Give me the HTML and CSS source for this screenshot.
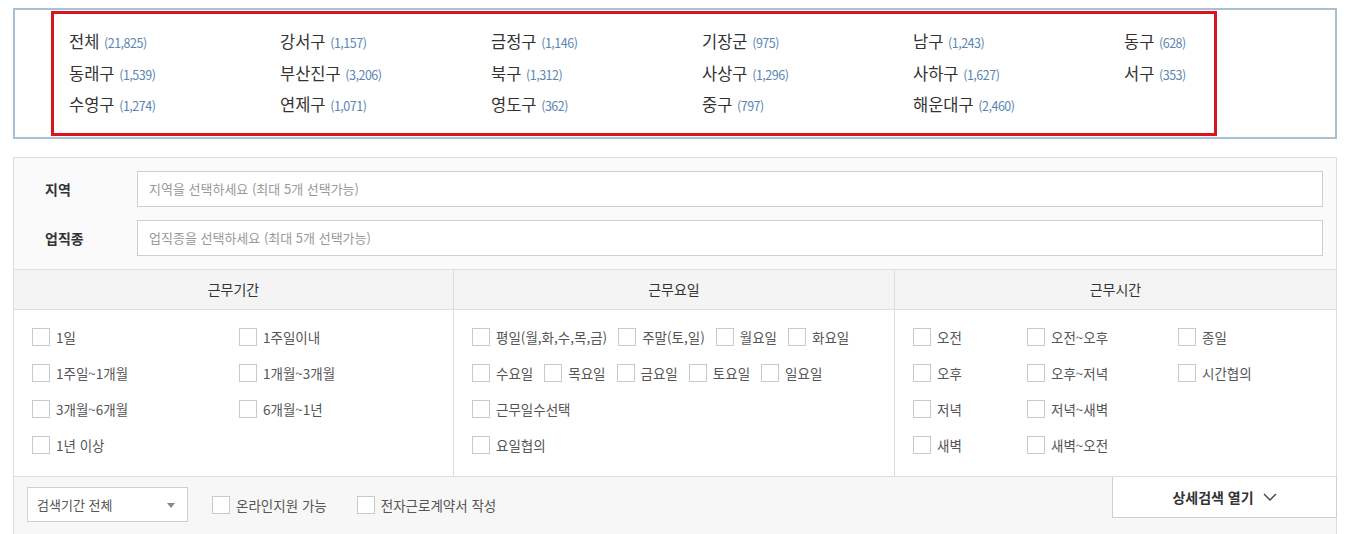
FILE: index.html
```html
<!DOCTYPE html>
<html lang="ko">
<head>
  <meta charset="UTF-8">
  <title>알바 검색</title>
  <link rel="stylesheet" href="styles.css">
</head>
<body>

  <div class="wrap">

    <!-- 지역별 건수 -->
    <div class="area-box">
      <ul class="area-list">
        <li>전체 <span class="cnt">(21,825)</span></li>
        <li>강서구 <span class="cnt">(1,157)</span></li>
        <li>금정구 <span class="cnt">(1,146)</span></li>
        <li>기장군 <span class="cnt">(975)</span></li>
        <li>남구 <span class="cnt">(1,243)</span></li>
        <li>동구 <span class="cnt">(628)</span></li>
        <li>동래구 <span class="cnt">(1,539)</span></li>
        <li>부산진구 <span class="cnt">(3,206)</span></li>
        <li>북구 <span class="cnt">(1,312)</span></li>
        <li>사상구 <span class="cnt">(1,296)</span></li>
        <li>사하구 <span class="cnt">(1,627)</span></li>
        <li>서구 <span class="cnt">(353)</span></li>
        <li>수영구 <span class="cnt">(1,274)</span></li>
        <li>연제구 <span class="cnt">(1,071)</span></li>
        <li>영도구 <span class="cnt">(362)</span></li>
        <li>중구 <span class="cnt">(797)</span></li>
        <li>해운대구 <span class="cnt">(2,460)</span></li>
      </ul>
    </div>

    <!-- 검색 조건 -->
    <div class="search-panel">
      <div class="field-rows">
        <div class="field">
          <label>지역</label>
          <div class="picker">지역을 선택하세요 (최대 5개 선택가능)</div>
        </div>
        <div class="field">
          <label>업직종</label>
          <div class="picker">업직종을 선택하세요 (최대 5개 선택가능)</div>
        </div>
      </div>

      <div class="cond-table">
        <div class="cond-col">
          <div class="cond-head">근무기간</div>
          <div class="cond-body period">
            <label class="chk"><span class="box"></span>1일</label>
            <label class="chk"><span class="box"></span>1주일이내</label>
            <label class="chk"><span class="box"></span>1주일~1개월</label>
            <label class="chk"><span class="box"></span>1개월~3개월</label>
            <label class="chk"><span class="box"></span>3개월~6개월</label>
            <label class="chk"><span class="box"></span>6개월~1년</label>
            <label class="chk"><span class="box"></span>1년 이상</label>
          </div>
        </div>

        <div class="cond-col">
          <div class="cond-head">근무요일</div>
          <div class="cond-body days">
            <div class="day-row">
              <label class="chk"><span class="box"></span>평일(월,화,수,목,금)</label>
              <label class="chk"><span class="box"></span>주말(토,일)</label>
              <label class="chk"><span class="box"></span>월요일</label>
              <label class="chk"><span class="box"></span>화요일</label>
            </div>
            <div class="day-row">
              <label class="chk"><span class="box"></span>수요일</label>
              <label class="chk"><span class="box"></span>목요일</label>
              <label class="chk"><span class="box"></span>금요일</label>
              <label class="chk"><span class="box"></span>토요일</label>
              <label class="chk"><span class="box"></span>일요일</label>
            </div>
            <div class="day-row">
              <label class="chk"><span class="box"></span>근무일수선택</label>
            </div>
            <div class="day-row">
              <label class="chk"><span class="box"></span>요일협의</label>
            </div>
          </div>
        </div>

        <div class="cond-col">
          <div class="cond-head">근무시간</div>
          <div class="cond-body hours">
            <label class="chk"><span class="box"></span>오전</label>
            <label class="chk"><span class="box"></span>오전~오후</label>
            <label class="chk"><span class="box"></span>종일</label>
            <label class="chk"><span class="box"></span>오후</label>
            <label class="chk"><span class="box"></span>오후~저녁</label>
            <label class="chk"><span class="box"></span>시간협의</label>
            <label class="chk"><span class="box"></span>저녁</label>
            <label class="chk"><span class="box"></span>저녁~새벽</label>
            <span></span>
            <label class="chk"><span class="box"></span>새벽</label>
            <label class="chk"><span class="box"></span>새벽~오전</label>
          </div>
        </div>
      </div>

      <div class="bottom-bar">
        <div class="select">검색기간 전체<span class="arrow"></span></div>
        <label class="chk"><span class="box"></span>온라인지원 가능</label>
        <label class="chk"><span class="box"></span>전자근로계약서 작성</label>
        <button class="detail-btn" type="button">상세검색 열기
          <svg width="14" height="9" viewBox="0 0 14 9"><polyline points="1,1 7,7 13,1" fill="none" stroke="#444" stroke-width="1.4"/></svg>
        </button>
      </div>
    </div>

  </div>

</body>
</html>
```

FILE: styles.css
```css
* { box-sizing: border-box; }
body { margin: 0; background: #fff; font-family: "Noto Sans CJK KR", "Noto Sans", sans-serif; color: #333; }
.wrap { width: 1324px; margin: 8px 0 0 13px; }

/* 지역 건수 박스 */
.area-box { border: 2px solid #a9c0d2; padding: 1px 0 1px 36px; }
.area-list { list-style: none; margin: 0; width: 1166px; padding: 12px 0 12px 15px; border: 3px solid #d8141f; display: grid; grid-template-columns: repeat(5, 211px) auto; }
.area-list li { height: 31.7px; line-height: 31.7px; font-size: 16.5px; color: #333; white-space: nowrap; }
.area-list .cnt { font-size: 12.5px; letter-spacing: -0.5px; color: #5b86b2; }

/* 검색 패널 */
.search-panel { margin-top: 18px; border: 1px solid #ddd; }
.field-rows { background: #fafafa; padding: 13px 13px 13px 31px; border-bottom: 1px solid #e2e2e2; display: flex; flex-direction: column; gap: 13px; }
.field { display: flex; align-items: center; }
.field label { width: 92px; font-size: 14px; font-weight: bold; color: #333; }
.picker { flex: 1; height: 36px; line-height: 34px; border: 1px solid #cfcfcf; background: #fff; padding-left: 11px; font-size: 13px; color: #999; }

.cond-table { display: grid; grid-template-columns: 439px 441px 1fr; }
.cond-col + .cond-col { border-left: 1px solid #ddd; }
.cond-head { height: 40px; line-height: 39px; background: #f4f4f4; border-bottom: 1px solid #e0e0e0; text-align: center; font-size: 14px; color: #333; }
.cond-body { padding: 18px 0 22px 18px; height: 166px; }

.chk { display: inline-flex; align-items: center; height: 18px; font-size: 13.5px; color: #555; white-space: nowrap; cursor: pointer; }
.chk .box { width: 18px; height: 18px; border: 1px solid #c9c9c9; background: #fff; margin-right: 6px; flex-shrink: 0; }

.period { display: grid; grid-template-columns: 207px auto; row-gap: 18px; }
.days { display: flex; flex-direction: column; gap: 18px; }
.day-row { display: flex; gap: 11px; }
.hours { display: grid; grid-template-columns: 114px 151px auto; row-gap: 18px; }

/* 하단 바 */
.bottom-bar { position: relative; background: #f7f7f7; border-top: 1px solid #ddd; height: 60px; padding: 10px 13px; display: flex; align-items: flex-start; }
.select { position: relative; width: 161px; height: 35px; line-height: 33px; border: 1px solid #d0d0d0; background: #fff; padding-left: 9px; font-size: 13px; color: #555; margin-right: 24px; }
.select .arrow { position: absolute; right: 12px; top: 15px; border-left: 4px solid transparent; border-right: 4px solid transparent; border-top: 5px solid #888; }
.bottom-bar .chk { height: 35px; margin-right: 30px; }
.detail-btn { position: absolute; top: 0; right: -1px; width: 225px; height: 41px; border: 1px solid #cfcfcf; border-top: none; background: #fff; font-family: inherit; font-size: 14px; font-weight: bold; color: #333; display: flex; align-items: center; justify-content: center; gap: 9px; cursor: pointer; }
```
